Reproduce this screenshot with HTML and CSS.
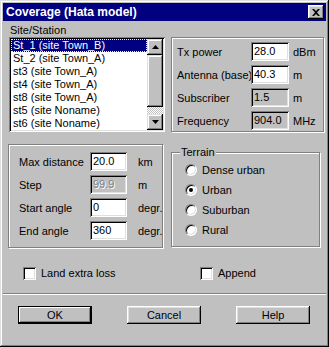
FILE: index.html
```html
<!DOCTYPE html>
<html>
<head>
    <title>Coverage (Hata model)</title>
    <link rel="stylesheet" href="styles.css">
</head>
<body>
    <div class="window">
        <div class="titlebar">
            <span class="title">Coverage (Hata model)</span>
            <span class="close-btn">
                <svg width="8" height="7" viewBox="0 0 8 7"><path d="M0 0h2l2 2 2-2h2L5 3.5 8 7H6L4 5 2 7H0l3-3.5z" fill="#000"/></svg>
            </span>
        </div>

        <div class="main">
            <div class="top-row">
                <div class="site-col">
                    <div class="caption">Site/Station</div>
                    <div class="listbox">
                        <ul class="items">
                            <li class="selected">St_1 (site Town_B)</li>
                            <li>St_2 (site Town_A)</li>
                            <li>st3 (site Town_A)</li>
                            <li>st4 (site Town_A)</li>
                            <li>st8 (site Town_A)</li>
                            <li>st5 (site Noname)</li>
                            <li>st6 (site Noname)</li>
                        </ul>
                        <div class="scrollbar">
                            <div class="sb-btn">
                                <svg width="7" height="4" viewBox="0 0 7 4"><path d="M3.5 0L7 4H0z" fill="#000"/></svg>
                            </div>
                            <div class="sb-thumb"></div>
                            <div class="sb-track"></div>
                            <div class="sb-btn">
                                <svg width="7" height="4" viewBox="0 0 7 4"><path d="M0 0h7L3.5 4z" fill="#000"/></svg>
                            </div>
                        </div>
                    </div>
                </div>

                <div class="group params">
                    <span class="lbl">Tx power</span><span class="input">28.0</span><span class="unit">dBm</span>
                    <span class="lbl">Antenna (base)</span><span class="input">40.3</span><span class="unit">m</span>
                    <span class="lbl">Subscriber</span><span class="input readonly">1.5</span><span class="unit">m</span>
                    <span class="lbl">Frequency</span><span class="input readonly">904.0</span><span class="unit">MHz</span>
                </div>
            </div>

            <div class="mid-row">
                <div class="group sweep">
                    <span class="lbl">Max distance</span><span class="input">20.0</span><span class="unit">km</span>
                    <span class="lbl">Step</span><span class="input readonly disabled">99.9</span><span class="unit">m</span>
                    <span class="lbl">Start angle</span><span class="input">0</span><span class="unit">degr.</span>
                    <span class="lbl">End angle</span><span class="input">360</span><span class="unit">degr.</span>
                </div>

                <div class="group terrain">
                    <span class="legend">Terrain</span>
                    <div class="option"><span class="radio"></span>Dense urban</div>
                    <div class="option"><span class="radio checked"></span>Urban</div>
                    <div class="option"><span class="radio"></span>Suburban</div>
                    <div class="option"><span class="radio"></span>Rural</div>
                </div>
            </div>

            <div class="checks">
                <div class="check land"><span class="box"></span>Land extra loss</div>
                <div class="check"><span class="box"></span>Append</div>
            </div>
        </div>

        <div class="separator"></div>

        <div class="buttons">
            <div class="button default">OK</div>
            <div class="button">Cancel</div>
            <div class="button help">Help</div>
        </div>
    </div>
</body>
</html>
```

FILE: styles.css
```css
body {
    margin: 0;
    background-color: #c0c0c0;
    font-family: "Liberation Sans", Arial, sans-serif;
    font-size: 11px;
    color: #000;
}
.window {
    width: 329px;
    height: 347px;
    box-sizing: border-box;
    padding: 3px;
    background-color: #c0c0c0;
    box-shadow: inset -1px -1px #000, inset 1px 1px #dfdfdf,
                inset -2px -2px #808080, inset 2px 2px #fff;
}
.titlebar {
    height: 18px;
    background-color: #000080;
    color: #fff;
    display: flex;
    align-items: center;
    justify-content: space-between;
    padding: 0 2px 0 3px;
}
.title {
    font-weight: bold;
    font-size: 12px;
}
.close-btn {
    width: 16px;
    height: 14px;
    box-sizing: border-box;
    background-color: #c0c0c0;
    display: flex;
    align-items: center;
    justify-content: center;
    box-shadow: inset -1px -1px #000, inset 1px 1px #fff,
                inset -2px -2px #808080, inset 2px 2px #dfdfdf;
}
.main {
    padding: 3px 0 0 6px;
}
.top-row {
    display: flex;
    align-items: flex-end;
    gap: 6px;
}
.caption {
    height: 13px;
    line-height: 13px;
    padding-left: 1px;
}
.listbox {
    width: 156px;
    height: 95px;
    box-sizing: border-box;
    padding: 2px;
    display: flex;
    background-color: #fff;
    box-shadow: inset 1px 1px #808080, inset -1px -1px #fff,
                inset 2px 2px #000, inset -2px -2px #dfdfdf;
}
.items {
    list-style: none;
    margin: 0;
    padding: 0;
    flex: 1;
    overflow: hidden;
}
.items li {
    height: 13px;
    line-height: 13px;
    padding-left: 2px;
    white-space: nowrap;
}
.items li.selected {
    background-color: #000080;
    color: #fff;
    outline: 1px dotted #ffff7f;
    outline-offset: -1px;
}
.scrollbar {
    width: 16px;
    display: flex;
    flex-direction: column;
}
.sb-btn, .sb-thumb {
    background-color: #c0c0c0;
    box-shadow: inset -1px -1px #000, inset 1px 1px #dfdfdf,
                inset -2px -2px #808080, inset 2px 2px #fff;
}
.sb-btn {
    height: 16px;
    display: flex;
    align-items: center;
    justify-content: center;
}
.sb-thumb {
    height: 52px;
}
.sb-track {
    flex: 1;
    background: repeating-conic-gradient(#fff 0 25%, #c0c0c0 0 50%) 0 0 / 2px 2px;
}
.group {
    box-sizing: border-box;
    border: 1px solid #808080;
    box-shadow: 1px 1px 0 #fff, inset 1px 1px 0 #fff;
}
.params, .sweep {
    display: grid;
    grid-auto-rows: 19px;
    row-gap: 4px;
    align-items: center;
    align-content: start;
}
.params {
    width: 153px;
    height: 95px;
    padding: 4px 0 0 5px;
    grid-template-columns: 74px 38px auto;
}
.params .unit {
    padding-left: 4px;
}
.input {
    height: 19px;
    box-sizing: border-box;
    padding: 3px 0 0 3px;
    line-height: 13px;
    background-color: #fff;
    box-shadow: inset 1px 1px #808080, inset -1px -1px #fff,
                inset 2px 2px #000, inset -2px -2px #dfdfdf;
}
.input.readonly {
    background-color: #c0c0c0;
}
.input.disabled {
    color: #808080;
    text-shadow: 1px 1px 0 #fff;
}
.lbl, .unit {
    white-space: nowrap;
}
.mid-row {
    display: flex;
    align-items: flex-start;
    gap: 8px;
    margin-top: 12px;
}
.sweep {
    width: 155px;
    height: 104px;
    margin-left: -1px;
    padding: 7px 0 0 10px;
    grid-template-columns: 71px 37px auto;
}
.sweep .unit {
    padding-left: 11px;
}
.terrain {
    position: relative;
    width: 149px;
    height: 95px;
    margin-top: 8px;
    padding: 7px 0 0 13px;
}
.legend {
    position: absolute;
    top: -7px;
    left: 8px;
    padding: 0 1px;
    line-height: 13px;
    background-color: #c0c0c0;
}
.option {
    height: 20px;
    display: flex;
    align-items: center;
    gap: 5px;
}
.radio {
    position: relative;
    width: 12px;
    height: 12px;
    box-sizing: border-box;
    border-radius: 50%;
    border: 1px solid;
    border-color: #808080 #fff #fff #808080;
    background-color: #fff;
    box-shadow: inset 1px 1px #000, inset -1px -1px #dfdfdf;
}
.radio.checked::after {
    content: "";
    position: absolute;
    left: 3px;
    top: 3px;
    width: 4px;
    height: 4px;
    border-radius: 50%;
    background-color: #000;
}
.checks {
    display: flex;
    margin-top: 19px;
    padding-left: 14px;
    height: 13px;
}
.check {
    display: flex;
    align-items: center;
    gap: 5px;
    line-height: 13px;
}
.check.land {
    width: 177px;
}
.box {
    width: 13px;
    height: 13px;
    box-sizing: border-box;
    background-color: #fff;
    box-shadow: inset 1px 1px #808080, inset -1px -1px #fff,
                inset 2px 2px #000, inset -2px -2px #dfdfdf;
}
.separator {
    margin-top: 13px;
    border-top: 1px solid #808080;
    border-bottom: 1px solid #fff;
}
.buttons {
    display: flex;
    gap: 35px;
    margin-top: 11px;
    padding-left: 15px;
}
.button {
    width: 74px;
    height: 18px;
    box-sizing: border-box;
    display: flex;
    align-items: center;
    justify-content: center;
    background-color: #c0c0c0;
    box-shadow: inset -1px -1px #000, inset 1px 1px #fff,
                inset -2px -2px #808080, inset 2px 2px #dfdfdf;
}
.button.default {
    border: 1px solid #000;
    box-shadow: inset -1px -1px #000, inset 1px 1px #fff,
                inset -2px -2px #808080;
}
.button.help {
    margin-left: 0;
}
```
